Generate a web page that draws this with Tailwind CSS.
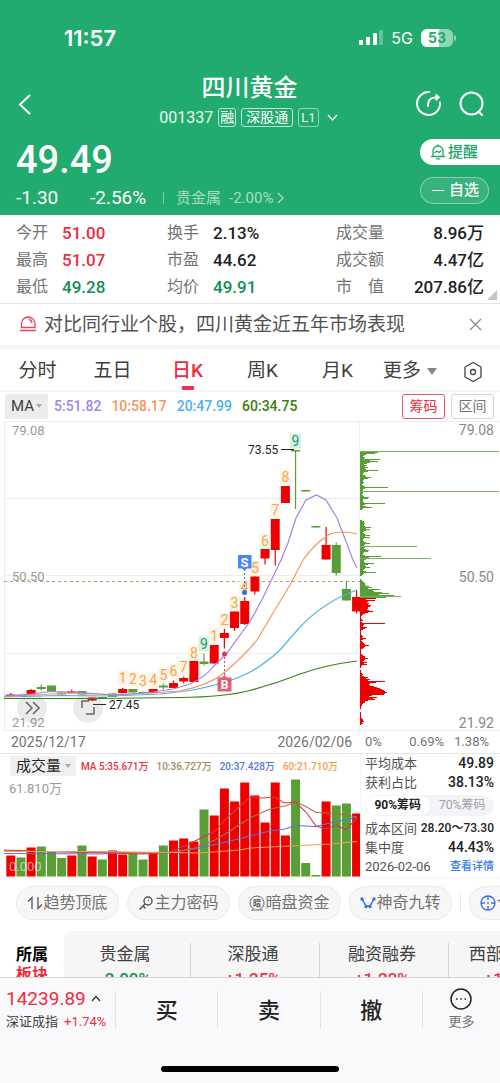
<!DOCTYPE html>
<html lang="zh-CN">
<head>
    <meta charset="UTF-8">
    <meta name="viewport" content="width=device-width, initial-scale=1.0">
    <title>四川黄金 001337</title>
    <script src="https://cdn.jsdelivr.net/npm/@tailwindcss/browser@4"></script>
</head>
<body class="h-screen overflow-hidden flex flex-col bg-white text-[#222] font-['Roboto','Noto_Sans_CJK_SC',sans-serif]">

<!-- Header -->
<header class="bg-[#22ab6e] text-white shrink-0 h-[215px]">
    <!-- Status bar -->
    <div class="flex items-center justify-between h-[76px] pl-16 pr-11 font-['Inter',sans-serif]">
        <span class="text-[22px] font-semibold">11:57</span>
        <div class="flex items-center gap-2">
            <svg class="w-6 h-4" viewBox="0 0 24 16" fill="white">
                <rect x="0" y="10" width="4" height="5" rx="1"/>
                <rect x="7" y="7" width="4" height="8" rx="1"/>
                <rect x="14" y="3" width="4" height="12" rx="1"/>
                <rect x="20" y="0" width="4" height="15" rx="1" opacity=".3"/>
            </svg>
            <span class="text-[16px]">5G</span>
            <div class="flex items-center gap-px">
                <div class="w-8 h-[18px] rounded-md bg-linear-to-r from-white from-55% to-white/50 to-55% text-[#22ab6e] text-[14px] leading-[18px] font-bold text-center">53</div>
                <div class="w-[2px] h-[6px] rounded-r bg-white/50"></div>
            </div>
        </div>
    </div>

    <!-- Title -->
    <div class="flex items-start justify-between pl-4 pr-[14px]">
        <button class="w-[68px] pt-4" aria-label="返回">
            <svg class="w-5 h-6" viewBox="0 0 20 24" fill="none" stroke="white" stroke-width="2"><path d="M14 3 4 12.500l10 9.500"/></svg>
        </button>
        <div class="flex flex-col items-center">
            <h1 class="text-[24px] leading-[24px] font-medium">四川黄金</h1>
            <div class="flex items-center gap-[5px] mt-1 h-[27px]">
                <span class="text-[16px] text-white/90">001337</span>
                <span class="border border-white/70 rounded-[3px] text-[14px] leading-[17px] px-px">融</span>
                <span class="border border-white/70 rounded-[3px] text-[14px] leading-[17px] px-1">深股通</span>
                <span class="border border-white/50 rounded-[3px] text-[13px] leading-[17px] px-[2px] text-white/90">L1</span>
                <svg class="w-4 h-3" viewBox="0 0 16 12" fill="none" stroke="white" stroke-width="1.300"><path d="m4 3 4.500 5L13 3"/></svg>
            </div>
        </div>
        <div class="flex gap-4 pt-[14px] w-[71px] shrink-0">
            <button aria-label="分享">
                <svg class="w-[27px] h-[27px]" viewBox="0 0 27 27" fill="none" stroke="white" stroke-width="2" stroke-linecap="round"><path d="M14 2A11.500 11.500 0 1 0 25 12.500"/><path d="M13 16C13 9 16 7 22.500 7.500"/><path d="M21 4.500v6l3.500-3z" fill="white" stroke-width="1"/></svg>
            </button>
            <button aria-label="搜索">
                <svg class="w-[27px] h-[27px]" viewBox="0 0 27 27" fill="none" stroke="white" stroke-width="2" stroke-linecap="round"><circle cx="13.500" cy="13.500" r="11"/><path d="m20.500 21.500 3.500 3.500"/></svg>
            </button>
        </div>
    </div>

    <!-- Price -->
    <div class="flex justify-between pl-4">
        <div>
            <div class="text-[38px] leading-[38px] font-medium mt-[10px]">49.49</div>
            <div class="flex items-center mt-[7px] h-6 text-[19px]">
                <span class="w-[74px]">-1.30</span>
                <span class="w-[73px]">-2.56%</span>
                <span class="w-px h-3 bg-white/40 mr-3"></span>
                <a href="#" class="flex items-center text-[15px] text-white/60">贵金属<span class="ml-2">-2.00%</span>
                    <svg class="w-3 h-4 ml-px" viewBox="0 0 12 16" fill="none" stroke="currentColor" stroke-width="1.300"><path d="m4 3 5 5-5 5"/></svg>
                </a>
            </div>
        </div>
        <div class="flex flex-col gap-3 w-20 mt-2">
            <button class="flex items-center h-[26px] pl-[10px] bg-white text-[#22a468] rounded-l-full text-[15px] font-medium">
                <svg class="w-4 h-4 mr-[2px]" viewBox="0 0 16 16" fill="none" stroke="currentColor" stroke-width="1.300" stroke-linecap="round"><path d="M3 12V7a5 5 0 0 1 10 0v5M1.500 12.500h13M6.500 14.800h3M8 1v1"/><path d="m5 8.500 2-1.500 2 1.500 2-1.500"/></svg>
                提醒
            </button>
            <button class="flex items-center h-[27px] w-[69px] pl-[11px] gap-[5px] rounded-full border border-white/40 bg-white/10 text-[15px] font-medium">
                <span class="w-3 h-[1px] bg-white"></span>自选
            </button>
        </div>
    </div>
</header>

<main class="flex-1 min-h-0 overflow-hidden">

    <!-- Quote figures -->
    <section class="relative grid grid-cols-[151fr_169fr_148fr] gap-y-[5px] px-4 pt-[7px] pb-[5px] border-b border-neutral-200 text-[17px] leading-[22px] font-medium">
        <div class="flex"><span class="w-[46px] text-[16px] font-normal text-neutral-500">今开</span><span class="text-[#ee2c40]">51.00</span></div>
        <div class="flex"><span class="w-[46px] text-[16px] font-normal text-neutral-500">换手</span><span>2.13%</span></div>
        <div class="flex justify-between"><span class="text-[16px] font-normal text-neutral-500">成交量</span><span>8.96万</span></div>
        <div class="flex"><span class="w-[46px] text-[16px] font-normal text-neutral-500">最高</span><span class="text-[#ee2c40]">51.07</span></div>
        <div class="flex"><span class="w-[46px] text-[16px] font-normal text-neutral-500">市盈</span><span>44.62</span></div>
        <div class="flex justify-between"><span class="text-[16px] font-normal text-neutral-500">成交额</span><span>4.47亿</span></div>
        <div class="flex"><span class="w-[46px] text-[16px] font-normal text-neutral-500">最低</span><span class="text-[#108f53]">49.28</span></div>
        <div class="flex"><span class="w-[46px] text-[16px] font-normal text-neutral-500">均价</span><span class="text-[#108f53]">49.91</span></div>
        <div class="flex justify-between"><span class="text-[16px] font-normal text-neutral-500">市　值</span><span>207.86亿</span></div>
        <svg class="absolute right-[3px] bottom-[3px] w-[10px] h-[10px]" viewBox="0 0 10 10" fill="#c4c4c4"><path d="M10 0v10H0z"/></svg>
    </section>

    <!-- Notice -->
    <section class="flex items-center h-[45px] px-4 border-b-4 border-[#f3f4f6]">
        <svg class="w-6 h-6 mr-1" viewBox="0 0 24 24" fill="none" stroke="#e8455a" stroke-width="1.300"><path d="M5.500 14.500V10a6.800 6.800 0 0 1 13.500 0v4.500zM4 17.500h16M13 6.500a4 4 0 0 1 3 3.500"/></svg>
        <p class="flex-1 text-[19px] leading-6 text-neutral-600 whitespace-nowrap">对比同行业个股，四川黄金近五年市场表现</p>
        <button class="w-4 h-4" aria-label="关闭">
            <svg viewBox="0 0 16 16" fill="none" stroke="#888" stroke-width="1.200"><path d="m2 2 11 11M13 2 2 13"/></svg>
        </button>
    </section>

    <!-- Period tabs -->
    <nav class="flex h-[43px] pt-1 text-[19px] text-neutral-700 border-b-2 border-neutral-100">
        <button class="w-[15%]">分时</button>
        <button class="w-[15%]">五日</button>
        <button class="w-[15%] relative text-[#ee2c40] font-medium">日K<span class="absolute bottom-0 left-1/2 -translate-x-1/2 w-[13px] h-[4px] rounded bg-[#e8334a]"></span></button>
        <button class="w-[15%]">周K</button>
        <button class="w-[15%]">月K</button>
        <button class="w-[14%] flex items-center justify-center gap-[6px] whitespace-nowrap">更多<svg class="w-[10px] h-[7px]" viewBox="0 0 10 7" fill="#888"><path d="M0 0h10L5 7z"/></svg></button>
        <button class="flex-1 flex items-center justify-center" aria-label="设置">
            <svg class="w-5 h-[22px]" viewBox="0 0 20 22" fill="none" stroke="#444" stroke-width="1.300" stroke-linejoin="round"><path d="m10 1.500 8 4.500v10l-8 4.500L2 16V6z"/><circle cx="10" cy="11" r="2.500"/></svg>
        </button>
    </nav>

    <!-- Moving averages -->
    <section class="flex items-center h-[29px] pl-[5px] pr-[6px] text-[14px] font-medium">
        <div class="relative mr-[6px]">
            <select aria-label="均线指标" class="appearance-none block w-[43px] h-[25px] pl-[6px] bg-[#ececec] text-[15px] font-normal text-neutral-700"><option>MA</option></select>
            <svg class="absolute right-[6px] top-[10px] w-[6px] h-1 pointer-events-none" viewBox="0 0 6 4" fill="#aaa"><path d="M0 0h6L3 4z"/></svg>
        </div>
        <div class="flex flex-1 gap-[10px]">
            <span class="text-[#a088e4]">5:51.82</span>
            <span class="text-[#f49760]">10:58.17</span>
            <span class="text-[#51aef0]">20:47.99</span>
            <span class="text-[#417d10]">60:34.75</span>
        </div>
        <button class="w-[43px] h-[25px] mr-[6px] border border-[#ec5567] rounded-[3px] text-[#ee2c40] font-normal">筹码</button>
        <button class="w-[43px] h-[25px] border border-neutral-300 rounded-[3px] text-neutral-500 font-normal">区间</button>
    </section>

    <!-- Candles and cost distribution -->
    <section class="relative">
        <svg class="block w-full" viewBox="0 0 500 310">
            <path d="M4.500 310V.5H500M4.500 77.500H359M4.500 154.500H359M4.500 232.500H359M4.500 309.500H500M359.500 0v310" fill="none" stroke="#ededed"/>
            <path d="M4 160.500H360" stroke="#bf9a5e" stroke-dasharray="3 3"/>
            <g font-size="13" fill="#999">
                <text x="12" y="14">79.08</text>
                <text x="12" y="160">50.50</text>
                <text x="12" y="306">21.92</text>
            </g>
            <g font-size="14" fill="#888" text-anchor="end">
                <text x="494" y="14">79.08</text>
                <text x="494" y="161">50.50</text>
                <text x="494" y="307">21.92</text>
            </g>
            <g id="candles"></g>
            <g fill="none" stroke-width="1.200">
                <path stroke="#417d10" d="M4 277.500 100 277.500 180 276.500Q225 276 250 269.500T300 253Q325 244 357 240"/>
                <path stroke="#51b3ea" d="M4 276 60 274.500 112 275 160 273 190 269.500Q230 262 250 251 265 243 280 229L300 206Q325 180 357 169"/>
                <path stroke="#f49760" d="M4 275.500 72 272 112 273.500 153 272 180 270Q210 264 225 251 245 234 257 219L273 192 290 164 303 139Q315 122 330 113 342 109 357 113"/>
                <path stroke="#a580e6" d="M4 275 31 273 51 270.500 72 271 92 272.500 112 274 133 273 153 271 173 268 190 263Q205 256 213 246L227 232 240 214 249 202Q260 184 270 162L281 139 288 122 296 97 306 79 316.500 74 326 79 337 97 347 123 353 139 357 147"/>
            </g>
            <g id="chips"></g>
            <g id="marks" font-size="14" text-anchor="middle"></g>

            <!-- Extremes -->
            <path d="M281 28.500H294M93 283.500H106" stroke="#222"/>
            <text x="248" y="33" font-size="12" fill="#222">73.55</text>
            <text x="109" y="288" font-size="12" fill="#222">27.45</text>

            <!-- Sell and buy points -->
            <path d="M244.500 148v20" stroke="#3b7bf0" stroke-dasharray="2 2"/>
            <circle cx="244.500" cy="171.500" r="2.500" fill="#2b6cf5"/>
            <path d="M238 134h13.500v13.500h-4.500l-2.500 2.500-2.500-2.500h-4z" fill="#4a86f7"/>
            <text x="244.500" y="145.500" font-size="13" font-weight="700" fill="#fff" text-anchor="middle">S</text>
            <path d="M224.500 236v19" stroke="#e2445c" stroke-dasharray="2 2"/>
            <circle cx="224.500" cy="233" r="2.500" fill="#d93a50"/>
            <path d="M217.500 256.500h4.500l2.500-2.500 2.500 2.500h4.500v14h-14z" fill="#e2445c" opacity=".85"/>
            <text x="224.500" y="268" font-size="12" font-weight="700" fill="#fff" text-anchor="middle">B</text>
        </svg>
        <button class="absolute left-[17px] bottom-[8px] w-[30px] h-[30px] rounded-full bg-neutral-500/15" aria-label="展开">
            <svg viewBox="0 0 30 30" fill="none" stroke="#666" stroke-width="1.500"><path d="m9 9 6 6-6 6M16 9l6 6-6 6"/></svg>
        </button>
        <button class="absolute left-[73px] bottom-[8px] w-[30px] h-[30px] rounded-full bg-neutral-500/15" aria-label="全屏">
            <svg viewBox="0 0 30 30" fill="none" stroke="#666" stroke-width="1.500"><path d="M9 15V8h7M21 14v7h-8"/></svg>
        </button>
    </section>

    <!-- Dates -->
    <section class="flex items-center h-[23px] border-b border-neutral-200 text-[14px] text-neutral-500">
        <div class="w-[72%] flex justify-between pl-[11px] pr-2"><span>2025/12/17</span><span>2026/02/06</span></div>
        <div class="flex-1 flex pl-[5px] pr-[11px] text-[13px]"><span class="flex-1">0%</span><span class="mr-[10px]">0.69%</span><span>1.38%</span></div>
    </section>

    <!-- Volume and cost panel -->
    <section class="flex border-b border-neutral-100">
        <div class="w-[72%] shrink-0 pt-[2px]">
            <div class="flex items-center pl-[10px] text-[10px] font-medium whitespace-nowrap">
                <div class="relative mr-[5px]">
                    <select aria-label="副图指标" class="appearance-none block w-[66px] h-5 pl-[6px] bg-[#f0f0f0] text-[15px] leading-5 font-normal text-neutral-800"><option>成交量</option></select>
                    <svg class="absolute right-[5px] top-2 w-[6px] h-1 pointer-events-none" viewBox="0 0 6 4" fill="#aaa"><path d="M0 0h6L3 4z"/></svg>
                </div>
                <div class="flex gap-2">
                    <span class="text-[#e03444]">MA 5:35.671万</span>
                    <span class="text-[#a8895c]">10:36.727万</span>
                    <span class="text-[#5577d8]">20:37.428万</span>
                    <span class="text-[#f0a04c]">60:21.710万</span>
                </div>
            </div>
            <svg class="block w-full" viewBox="0 0 360 101">
                <text x="9" y="17" font-size="13" fill="#999">61.810万</text>
                <g id="volumes"></g>
                <g fill="none" stroke-width="1.100">
                    <path stroke="#5577d8" d="M4 77.500 100 78 112 77.500 170 77 200 72 230 65 250 60 270 55 285 53 295 49.500 316 50.500 336 45.500 357 41.500"/>
                    <path stroke="#a8704c" d="M4 75 100 76 150 77 175 76 195 72 215 64 230 55 250 42 270 33 285 30 296 26 305 30 316 36.500 336 37.500 357 41"/>
                    <path stroke="#e03444" d="M4 74 30 75 60 76 112 77 143 78 170 76 187 69 215 55 225 44 240 30 250 21 262 22 275 21 284 27 295 26 306 36 316 50 326 53 336 49.500 346 53.500 357 42"/>
                    <path stroke="#f0a04c" d="M4 75.500 100 75.500 170 76.500 200 77 240 74 250 72 290 70 330 68 357 65.500"/>
                </g>
                <text x="9" y="95" font-size="13" fill="#fff" fill-opacity=".6">0.000</text>
            </svg>
        </div>
        <div class="flex-1 min-w-0 border-l border-neutral-100 pl-1 pr-[6px] text-[13px] leading-[19px] text-neutral-600">
            <div class="flex justify-between"><span>平均成本</span><span class="text-[14px] font-medium text-[#222]">49.89</span></div>
            <div class="flex justify-between"><span>获利占比</span><span class="text-[14px] font-medium text-[#222]">38.13%</span></div>
            <div class="flex my-[3px] rounded-full bg-[#f2f4f7] text-[12px] leading-[19px] text-center">
                <button class="flex-1 rounded-full bg-white border border-[#f2f4f7] font-bold text-[#222]">90%筹码</button>
                <button class="flex-1 text-neutral-400">70%筹码</button>
            </div>
            <div class="flex justify-between whitespace-nowrap"><span>成本区间</span><span class="text-[12px] font-medium text-[#222]">28.20～73.30</span></div>
            <div class="flex justify-between"><span>集中度</span><span class="text-[14px] font-medium text-[#222]">44.43%</span></div>
            <div class="flex justify-between whitespace-nowrap"><span>2026-02-06</span><a href="#" class="text-[11px] font-medium text-[#3b7bf0]">查看详情</a></div>
        </div>
    </section>

    <!-- Tool chips -->
    <section class="flex items-center gap-2 pl-4 mt-2 overflow-hidden text-[16px] text-neutral-500">
        <button class="w-[103px] h-[34px] shrink-0 flex items-center justify-center rounded-full bg-[#f7f7f8] border border-neutral-200/60">
            <svg class="w-4 h-4" viewBox="0 0 16 16" fill="none" stroke="#555" stroke-width="1.300"><path d="M1 6.500 5 2.500V14M15 9.500l-4 4V2"/></svg>趋势顶底
        </button>
        <button class="w-[103px] h-[34px] shrink-0 flex items-center justify-center rounded-full bg-[#f7f7f8] border border-neutral-200/60">
            <svg class="w-4 h-4" viewBox="0 0 16 16" fill="none" stroke="#555" stroke-width="1.500"><circle cx="10" cy="6" r="4"/><path d="m7 9-5.500 5.500M5 11l2.500 2.500M10 5.500h1"/></svg>主力密码
        </button>
        <button class="w-[103px] h-[34px] shrink-0 flex items-center justify-center rounded-full bg-[#f7f7f8] border border-neutral-200/60">
            <svg class="w-4 h-4" viewBox="0 0 16 16" fill="none" stroke="#666"><path d="M5 14.300a7 7 0 1 1 6 0M2 15h12"/><text x="8" y="11" font-size="8" font-weight="700" fill="#555" stroke="none" text-anchor="middle">暗</text></svg>暗盘资金
        </button>
        <button class="w-[103px] h-[34px] shrink-0 flex items-center justify-center rounded-full bg-[#f7f7f8] border border-neutral-200/60">
            <svg class="w-4 h-4" viewBox="0 0 16 16" fill="#3b6fe8" stroke="#3b6fe8" stroke-width="1.500"><path d="m2 4 4 7h4l4-7" fill="none"/><circle cx="2" cy="4" r="1"/><circle cx="6" cy="11.500" r="1"/><circle cx="10" cy="11.500" r="1"/><circle cx="14" cy="4" r="1"/></svg>神奇九转
        </button>
        <span class="w-px h-5 shrink-0 bg-neutral-200"></span>
        <button class="w-[103px] h-[34px] shrink-0 flex items-center pl-[10px] rounded-full bg-[#f7f7f8] border border-neutral-200/60">
            <svg class="w-4 h-4 mr-px shrink-0" viewBox="0 0 16 16" fill="none" stroke="#3b6fe8" stroke-width="1.300"><circle cx="8" cy="8" r="7"/><path d="M8 1v4M8 11v4M1 8h4M11 8h4"/><circle cx="8" cy="8" r="1" fill="#3b6fe8" stroke="none"/></svg>个股诊断
        </button>
    </section>

    <!-- Sectors -->
    <section class="flex mt-[11px] overflow-hidden text-[17px] leading-[22px] text-center">
        <div class="w-16 shrink-0 pt-[14px] text-[16px] leading-5 font-bold text-black">所属<br><span class="text-[#ee2c40]">板块</span></div>
        <div class="flex flex-1 min-w-0 overflow-hidden rounded-tl-lg bg-[#f6f6f7] pt-3 pb-2 text-neutral-700 divide-x divide-neutral-300">
            <div class="w-[127px] shrink-0 pr-1">贵金属<div class="pt-[3px] text-[#14924f] font-medium">-2.00%</div></div>
            <div class="w-[129px] shrink-0 pr-1">深股通<div class="pt-[3px] text-[#ee2c40] font-medium">+1.25%</div></div>
            <div class="w-[129px] shrink-0 pr-1">融资融券<div class="pt-[3px] text-[#ee2c40] font-medium">+1.22%</div></div>
            <div class="w-[129px] shrink-0 pr-1">西部大开发<div class="pt-[3px] text-[#ee2c40] font-medium">+1.10%</div></div>
        </div>
    </section>
</main>

<!-- Trade bar -->
<footer class="shrink-0 h-[106px] flex flex-col justify-between bg-[#f9f9fc] border-t border-neutral-300">
    <div class="flex items-center h-16">
        <div class="w-[23%] pl-[6px] whitespace-nowrap">
            <div class="flex items-center gap-1 text-[19px] leading-6 text-[#ee2c40]">14239.89<svg class="w-3 h-3" viewBox="0 0 12 12" fill="none" stroke="#333" stroke-width="1.300"><path d="m2 8 4-4.500L10 8"/></svg></div>
            <div class="flex gap-[6px] text-[13px] leading-[22px] text-neutral-700">深证成指<span class="text-[#ee2c40]">+1.74%</span></div>
        </div>
        <button class="flex-1 h-[38px] border-l border-neutral-200 text-[22px] font-medium">买</button>
        <button class="flex-1 h-[38px] border-l border-neutral-200 text-[22px] font-medium">卖</button>
        <button class="flex-1 h-[38px] border-l border-neutral-200 text-[22px] font-medium">撤</button>
        <div class="w-[78px] h-[38px] border-l border-neutral-200 flex items-center justify-center">
            <button class="flex flex-col items-center gap-[2px] text-[13px] leading-5 text-neutral-500">
                <svg class="w-[22px] h-[22px]" viewBox="0 0 22 22" fill="none" stroke="#222" stroke-width="1.500"><circle cx="11" cy="11" r="10"/><path d="M6 11h1.500M10.300 11h1.500M14.500 11H16"/></svg>更多
            </button>
        </div>
    </div>
    <div class="w-[178px] h-[6px] mb-[11px] mx-auto rounded-full bg-black"></div>
</footer>

<script>
    const RED = '#ee0000';
    const GREEN = '#5a9e38';
    const STEP = 10.17;
    const FIRST = 10.8;

    function rect(x, y, w, h, fill) {
        return `<rect x="${x}" y="${y}" width="${w}" height="${h}" fill="${fill}"/>`;
    }

    // [up, high, body top, body bottom, low]
    const candles = [
        [1, 272, 273.5, 275, 276], [1, 273.5, 274, 275, 275], [1, 268, 269, 273.5, 273.5], [0, 263.5, 266, 268, 269.5],
        [0, 264.5, 264.5, 270.5, 270.5], [0, 271.5, 271.5, 273.5, 273.5], [1, 268.5, 270.5, 272, 272], [0, 270, 270, 273.5, 273.5],
        [1, 276.5, 276.5, 279.5, 280], [0, 276, 276, 277.5, 277.5], [0, 272.5, 272.5, 276, 276], [1, 267, 268, 272, 272],
        [0, 268, 268, 271.5, 271.5], [0, 270.5, 271, 272, 272], [1, 268, 268, 272, 272], [0, 262.5, 264.5, 266.5, 268.5],
        [1, 259.5, 262, 267, 267], [1, 255.5, 257, 260.5, 262.5], [1, 240, 240, 261, 261], [0, 232.5, 240.5, 243, 244.5],
        [1, 224, 224, 242.5, 242.5], [1, 208, 212, 217, 227.5], [1, 190.5, 190.5, 207, 210], [1, 176, 180, 203, 204],
        [1, 155.5, 155.5, 170.5, 173.5], [1, 128, 128, 137.5, 143.5], [1, 98, 98, 129, 144.5], [1, 65, 65, 82, 82],
        [0, 29, 29, 30.5, 88], [0, 69, 69, 70.5, 70.5], [0, 105, 105, 106.5, 106.5], [1, 106, 124, 138.5, 138.5],
        [0, 121.5, 124, 152, 154.5], [0, 160.5, 168, 179.5, 179.5], [1, 169, 176, 190.5, 192.5]
    ];
    document.getElementById('candles').innerHTML = candles.map(([up, high, top, bottom, low], i) => {
        const x = FIRST + i * STEP;
        const color = up ? RED : GREEN;
        return rect(x - 0.6, high, 1.2, low - high, color) + rect(x - 4.5, top, 9, bottom - top, color);
    }).join('');

    // Holdings by price: first row, colour, bar lengths going down
    const chips = [
        [30, GREEN, [139, 18, 15, 6, 4, 3, 5, 4, 20, 10, 18, 10, 7, 4, 7, 5, 8, 5, 6, 18, 8, 4, 3, 3, 5, 6, 11, 8, 4, 3, 3, 4, 3, 2, 3, 5, 28, 5, 3, 3, 139, 3, 3, 2, 3, 4, 9, 8, 3, 3, 3, 4, 25, 5, 3, 6, 12, 3, 2]],
        [99, GREEN, [2, 4, 4, 5, 4, 4, 5, 11, 6, 10, 6, 4, 3, 4, 5, 10, 5, 10, 4, 3, 3, 4, 6, 10, 5, 4, 57, 5, 4, 6, 9, 8, 4, 3, 3, 5, 21, 9, 71, 6, 4, 4, 5, 14, 8, 5, 6, 10, 5, 4, 3, 6, 16, 4, 3, 2]],
        [158, GREEN, [1, 2, 3, 4, 5, 5, 6, 9, 12, 8, 20, 13, 14, 22, 29, 19, 34, 41, 26]],
        [177, RED, [16, 6, 15, 8, 7, 9, 8, 11, 10, 8, 8, 7, 9, 13, 8, 5, 3, 2, 1, 1, 1, 2, 3, 1, 2, 25, 4, 3, 3, 7, 5, 3, 1, 1, 1, 1, 1, 2, 3, 2, 6, 3, 1, 2, 3, 4, 5, 9, 5, 4, 3, 1, 1, 1, 1, 1, 2, 3, 5, 5, 8, 5, 4, 3, 7, 4, 7, 2, 1, 1]],
        [249, RED, [1, 1, 1, 2, 3, 2, 4, 8, 6, 10, 8, 25, 16, 10, 9, 10, 14, 17, 20, 22, 24, 25, 27, 25, 24, 12, 9, 17, 13, 15, 8, 5, 5, 3, 2, 2, 1, 1, 1]],
        [291, RED, [1, 1, 1, 1, 1, 1, 2, 3, 3, 4, 2, 3, 1]]
    ];
    document.getElementById('chips').innerHTML = chips.map(([start, color, rows]) =>
        rows.map((len, i) => rect(360, start + i, len, len > 40 ? 0.8 : 1, color)).join('')
    ).join('');

    // Nine-turn counts: [candle, label, centre y]
    const marks = [
        [11, 1, 257], [12, 2, 258], [13, 3, 260], [14, 4, 259], [15, 5, 254], [16, 6, 250], [17, 7, 246], [18, 8, 232], [19, 9, 223],
        [20, 1, 215], [21, 2, 199], [22, 3, 182], [23, 4, 166], [24, 5, 147], [25, 6, 120], [26, 7, 89], [27, 8, 56], [28, 9, 20]
    ];
    document.getElementById('marks').innerHTML = marks.map(([i, n, y]) => {
        const x = FIRST + i * STEP;
        return rect(x - 5.5, y - 7.5, 11, 15, n === 9 ? '#d3f2e4' : '#fef4e6') +
            `<text x="${x}" y="${y + 5}" fill="${n === 9 ? '#2a9d66' : '#f0a850'}">${n}</text>`;
    }).join('');

    // [up, height]
    const volumes = [
        [1, 21], [0, 19], [1, 29], [0, 30], [0, 25], [0, 18.5], [1, 21], [0, 31], [1, 20], [0, 17], [1, 26], [1, 22],
        [0, 23], [0, 17], [1, 24], [0, 31], [1, 36], [1, 38], [1, 35], [0, 67], [1, 61], [1, 88], [1, 75], [1, 94],
        [1, 81], [1, 54], [1, 94], [1, 41], [0, 97], [0, 13.5], [0, 1.5], [1, 75], [0, 71], [0, 73], [1, 63]
    ];
    document.getElementById('volumes').innerHTML = volumes.map(([up, h], i) =>
        rect(FIRST + i * STEP - 4.5, 100.5 - h, 9, h, up ? RED : GREEN)
    ).join('');
</script>

</body>
</html>
